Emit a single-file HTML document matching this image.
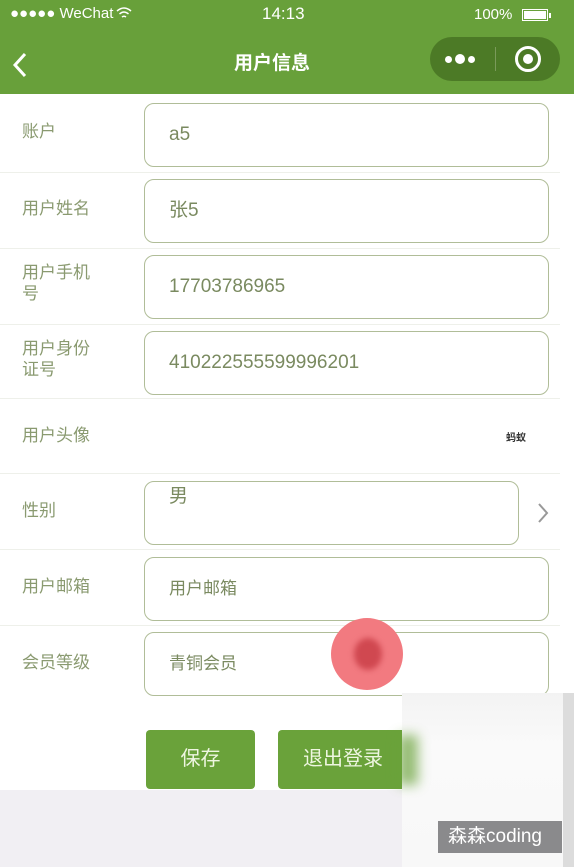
<!DOCTYPE html>
<html><head><meta charset="utf-8"><style>
*{margin:0;padding:0;box-sizing:border-box}
body{width:574px;height:867px;overflow:hidden;position:relative;background:#fff;font-family:"Liberation Sans","Noto Sans CJK SC",sans-serif}
.hdr{position:absolute;left:0;top:0;width:574px;height:94px;background:#68a03a;color:#fff}
.lbl{position:absolute;left:22px;color:#8a9a70;font-size:17px;line-height:21px}
.inp{position:absolute;left:144px;width:405px;height:64px;border:1.5px solid #b0bd98;border-radius:10px;background:#fff;color:#7a8a60;font-size:19px;padding-left:24px;line-height:62px}
.sep{position:absolute;left:0;width:560px;height:1px;background:#eef0ea}
.btn{position:absolute;top:730px;height:59px;background:#6aa23a;color:#eef6e0;border-radius:4px;font-size:20px;text-align:center;line-height:58px}
</style></head><body>
<div class="hdr">
<div style="position:absolute;left:10px;top:5px;font-size:15px">●●●●● WeChat</div>
<svg style="position:absolute;left:116px;top:6px" width="16" height="14"><path d="M1 5 Q8 -1 15 5 M3.5 8 Q8 4 12.5 8 M6 11 Q8 9.5 10 11" stroke="#fff" stroke-width="1.5" fill="none"/></svg>
<div style="position:absolute;left:262px;top:4px;font-size:17px">14:13</div>
<div style="position:absolute;left:474px;top:6px;font-size:15px">100%</div>
<div style="position:absolute;left:522px;top:9px;width:26px;height:12px;border:1.5px solid #fff;padding:1px"><div style="width:100%;height:100%;background:#fff"></div></div>
<div style="position:absolute;left:549px;top:13px;width:2px;height:5px;background:#fff"></div>
<svg style="position:absolute;left:10px;top:50px" width="20" height="30"><path d="M15 4 L5 15 L15 26" stroke="#fff" stroke-width="3" fill="none"/></svg>
<div style="position:absolute;left:0;width:574px;top:48px;text-align:center;font-size:19px;font-weight:bold;padding-right:30px">用户信息</div>
<div style="position:absolute;left:430px;top:37px;width:130px;height:44px;border-radius:22px;background:#4c7a26">
<div style="position:absolute;left:15px;top:19px;width:7px;height:7px;border-radius:50%;background:#fff"></div>
<div style="position:absolute;left:25px;top:17px;width:10px;height:10px;border-radius:50%;background:#fff"></div>
<div style="position:absolute;left:38px;top:19px;width:7px;height:7px;border-radius:50%;background:#fff"></div>
<div style="position:absolute;left:65px;top:10px;width:1px;height:24px;background:#7a9a5a"></div>
<div style="position:absolute;left:85px;top:9px;width:26px;height:26px;border-radius:50%;border:3px solid #fff"></div>
<div style="position:absolute;left:93px;top:17px;width:10px;height:10px;border-radius:50%;background:#fff"></div>
</div></div>

<div class="lbl" style="top:121px">账户</div><div class="inp" style="top:103px">a5</div>
<div class="sep" style="top:172px"></div>
<div class="lbl" style="top:198px">用户姓名</div><div class="inp" style="top:179px">张5</div>
<div class="sep" style="top:248px"></div>
<div class="lbl" style="top:262px;width:100px">用户手机<br>号</div><div class="inp" style="top:255px">17703786965</div>
<div class="sep" style="top:324px"></div>
<div class="lbl" style="top:338px;width:100px">用户身份<br>证号</div><div class="inp" style="top:331px">410222555599996201</div>
<div class="sep" style="top:398px"></div>
<div class="lbl" style="top:425px">用户头像</div>
<div style="position:absolute;left:506px;top:429px;font-size:10px;color:#333;font-weight:bold">蚂蚁</div>
<div class="sep" style="top:473px"></div>
<div class="lbl" style="top:500px">性别</div>
<div class="inp" style="top:481px;width:375px;line-height:30px">男</div>
<svg style="position:absolute;left:536px;top:501px" width="14" height="24"><path d="M3 3 L11 12 L3 21" stroke="#999" stroke-width="2" fill="none"/></svg>
<div class="sep" style="top:549px"></div>
<div class="lbl" style="top:576px">用户邮箱</div><div class="inp" style="top:557px;font-size:17px">用户邮箱</div>
<div class="sep" style="top:625px"></div>
<div class="lbl" style="top:652px">会员等级</div><div class="inp" style="top:632px;font-size:17px">青铜会员</div>
<div style="position:absolute;left:331px;top:618px;width:72px;height:72px;border-radius:50%;background:#f27a80"></div>
<div style="position:absolute;left:354px;top:638px;width:28px;height:32px;border-radius:50%;background:#d04850;filter:blur(3px)"></div>

<div class="btn" style="left:146px;width:109px">保存</div>
<div class="btn" style="left:278px;width:150px;padding-right:20px">退出登录</div>
<div style="position:absolute;left:0;top:790px;width:574px;height:77px;background:#f1eff3"></div>
<div style="position:absolute;left:402px;top:693px;width:172px;height:174px;background:linear-gradient(#f3f3f3,#fafafa 30%,#f8f8f8)"></div>
<div style="position:absolute;left:398px;top:735px;width:20px;height:50px;background:#6aa23a;filter:blur(6px);opacity:.7"></div>
<div style="position:absolute;left:563px;top:693px;width:11px;height:174px;background:#dcdcdc"></div>
<div style="position:absolute;left:438px;top:821px;width:124px;height:32px;background:#8a8a8c;color:#fff;font-size:19px;line-height:32px;padding-left:10px">森森coding</div>
</body></html>
